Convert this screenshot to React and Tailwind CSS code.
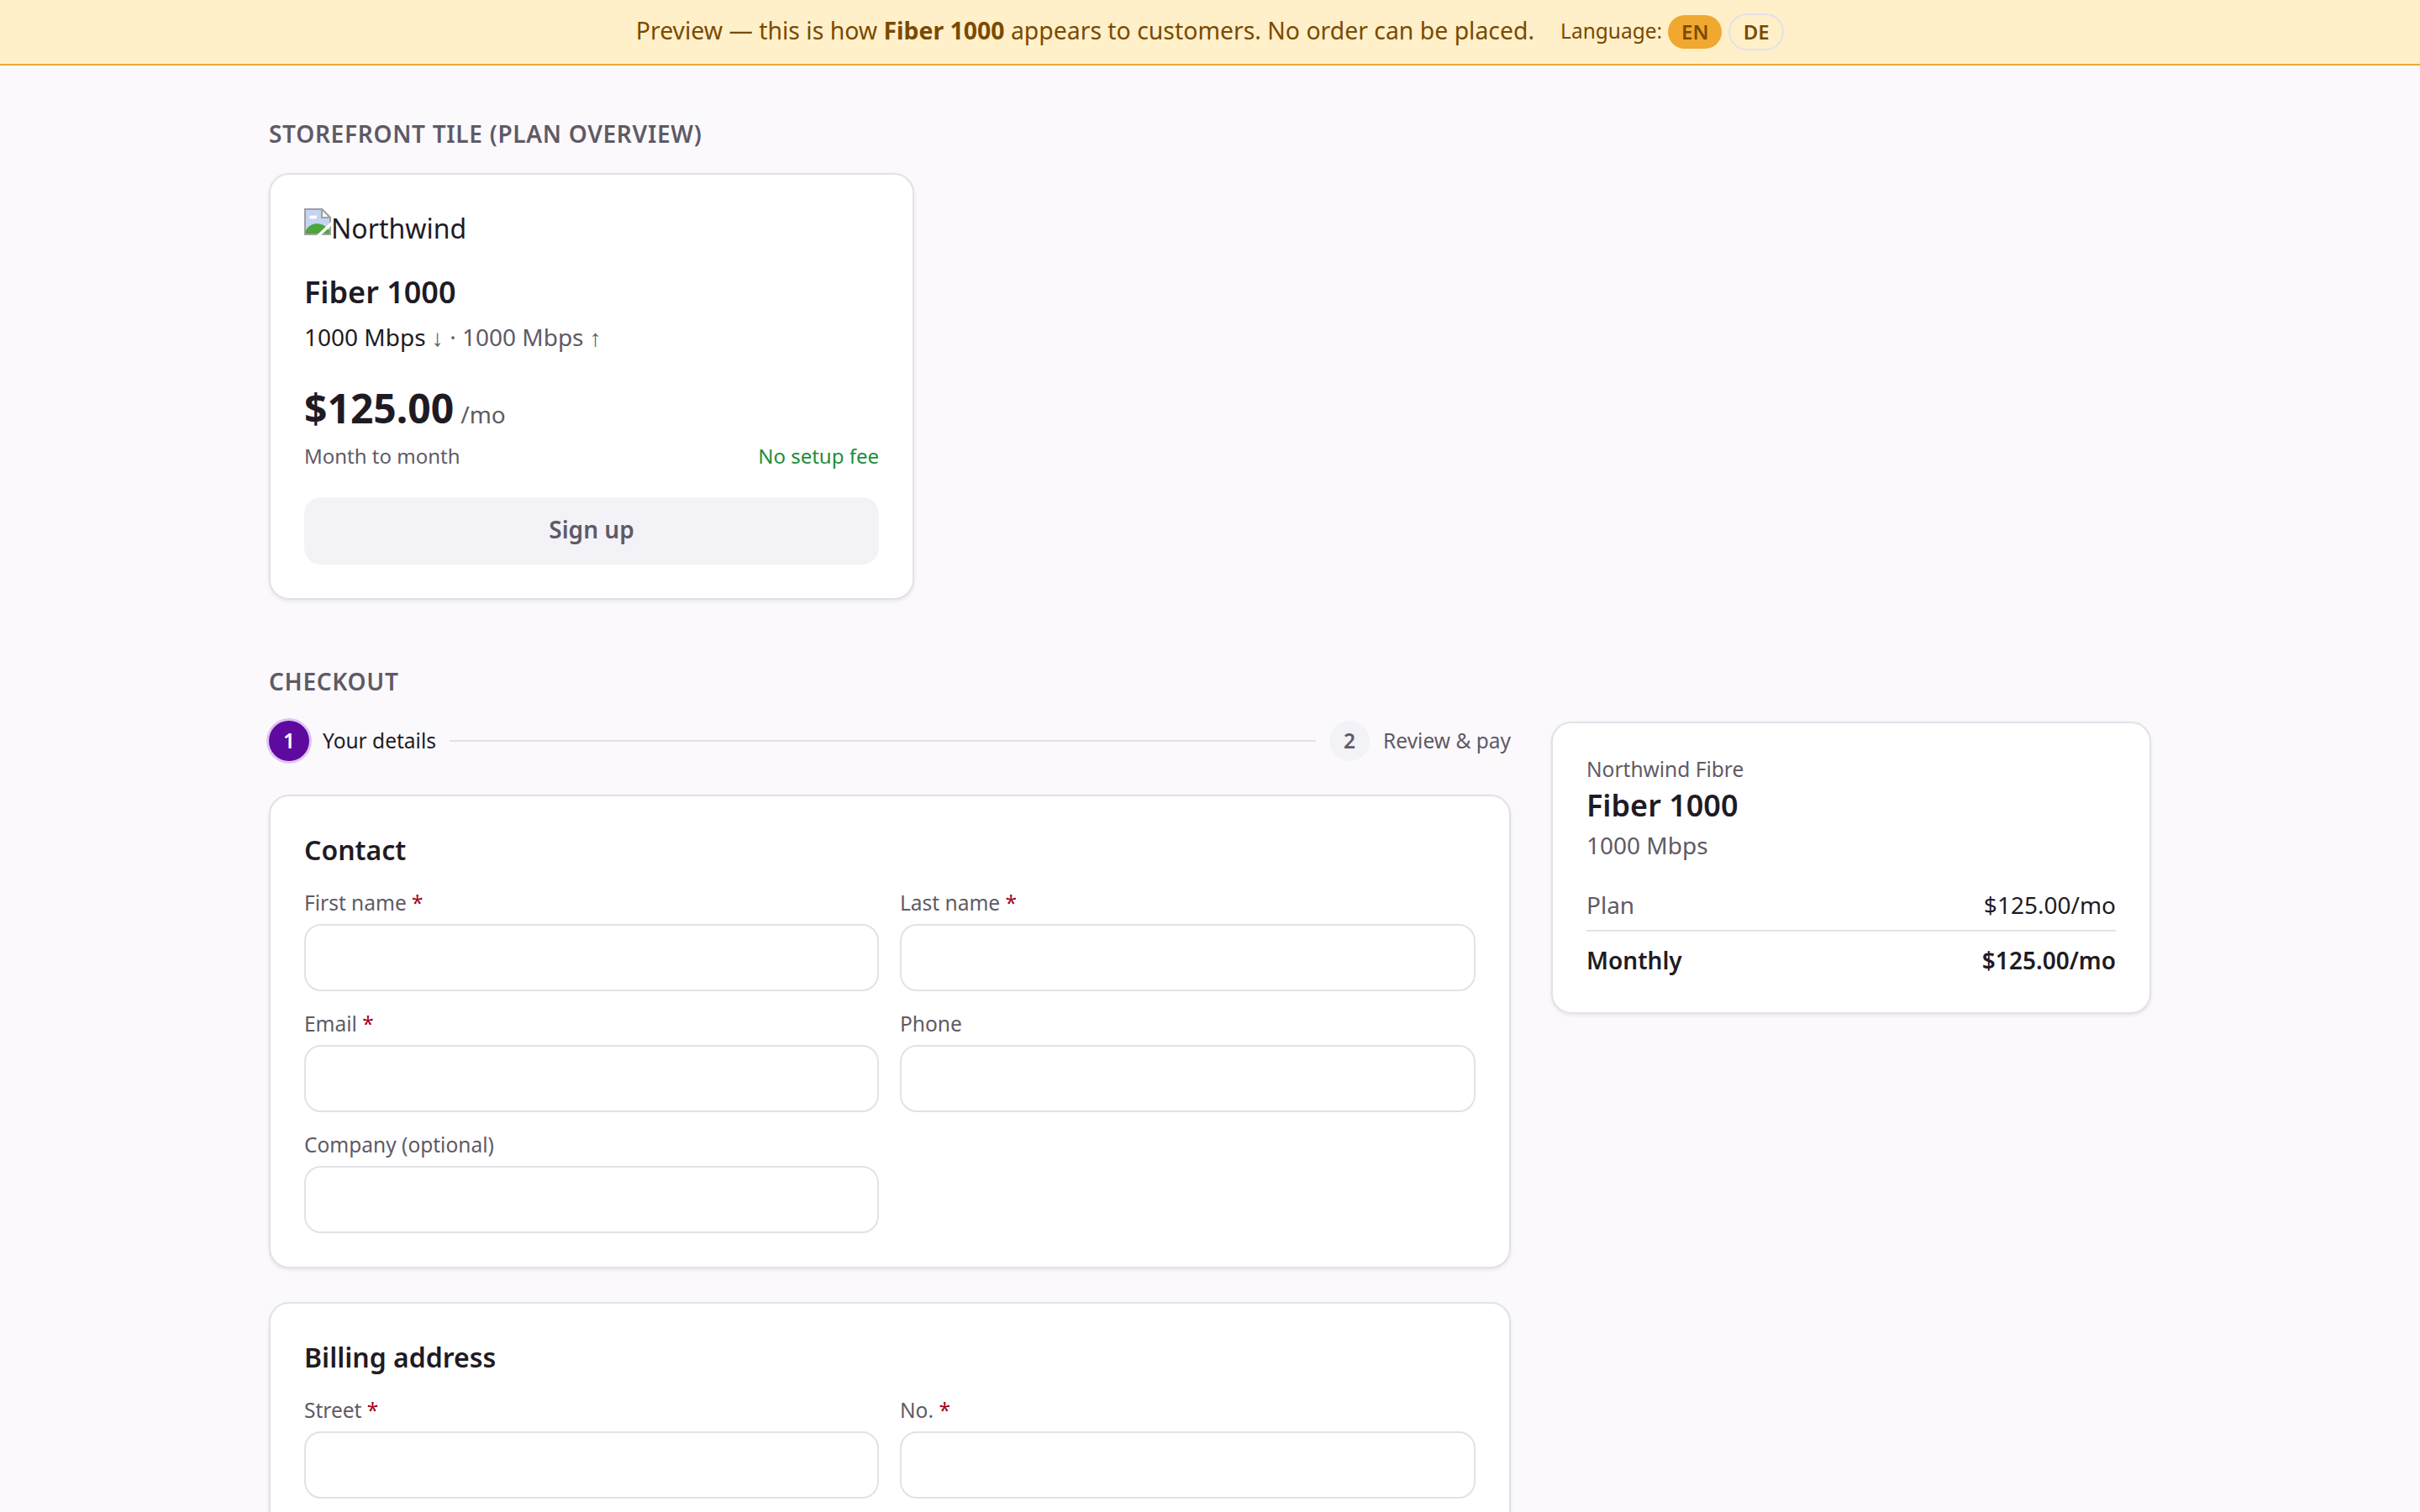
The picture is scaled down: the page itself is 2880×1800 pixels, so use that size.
import React from "react";

const BrokenImage = () => (
  <svg width="32" height="32" viewBox="0 0 16 16" className="shrink-0">
    <path d="M0.5 0.5H10.500L15.500 5.500V15.500H0.5Z" fill="#c3d5f2" stroke="#a0a0a0" />
    <path d="M10.500 0.5V5.500H15.500Z" fill="#fff" stroke="#a0a0a0" />
    <path d="M3 5.500C3 4 5 4 5.500 4.500C6.500 3.500 8 4.500 7.500 5.500C8 6.500 3.500 6.500 3 5.500Z" fill="#fff" />
    <path d="M1 15V13C3 9.500 7 8.500 10 9.500C12 10 13.500 11.500 15 13V15Z" fill="#4fa43a" />
    <path d="M7.500 16L16 8V10.500L10 16Z" fill="#fff" />
  </svg>
);

const Field = ({ label, required }) => (
  <div className="flex flex-col">
    <label className="pt-[1px] text-[24.5px] leading-[36px] text-[#5f5a66] mb-[7px]">
      {label}
      {required && <span className="text-[#a50021]"> *</span>}
    </label>
    <input className="h-[80px] w-full rounded-[20px] border-2 border-[#e3e1e8] bg-white" />
  </div>
);

const SectionTitle = ({ children }) => (
  <h2 className="text-[28px] leading-[40px] font-semibold tracking-[0.7px] text-[#5f5a66] uppercase">{children}</h2>
);

export default function App() {
  return (
    <div className="h-screen overflow-hidden bg-[#fbf9fc] text-[#1f1b24] font-['Noto_Sans',sans-serif]">
      <div className="h-[78px] flex items-center justify-center gap-[31px] bg-[#fff0c9] border-b-2 border-[#f0a830] text-[#7a4a00]">
        <span className="pb-[4px] text-[28.4px]">
          Preview — this is how <strong className="font-bold">Fiber 1000</strong> appears to customers. No order can be placed.
        </span>
        <div className="flex items-center gap-[7px] text-[24.5px]">
          <span className="pb-[1px]">Language:</span>
          <span className="h-[40px] w-[64px] justify-center rounded-full bg-[#f0a830] flex items-center text-[24px] font-semibold">EN</span>
          <span className="ml-[1px] h-[44px] w-[66px] justify-center rounded-full border-2 border-[#e3e1e8] flex items-center text-[24px] font-semibold">DE</span>
        </div>
      </div>

      <main className="w-[2240px] mx-auto pt-[61px]">
        <SectionTitle>Storefront tile (plan overview)</SectionTitle>
        <section className="mt-[27px] w-[768px] rounded-[24px] border-2 border-[#e3e1e8] bg-white shadow-[0_2px_4px_rgba(31,27,36,0.08)] p-[40px]">
          <div className="text-[32px] leading-[48px] flex items-start"><BrokenImage />Northwind</div>
          <h3 className="mt-[27px] text-[36px] leading-[50px] font-semibold">Fiber 1000</h3>
          <p className="mt-[8px] pb-[1px] text-[28px] leading-[40px] text-[#5f5a66]"><span className="text-[#1f1b24]">1000 Mbps</span> ↓ · 1000 Mbps ↑</p>
          <div className="mt-[29px] flex items-baseline gap-[8px]">
            <span className="text-[48px] leading-[70px] font-bold">$125.00</span>
            <span className="text-[28px] text-[#5f5a66]">/mo</span>
          </div>
          <div className="mt-[4px] flex justify-between text-[24px] leading-[36px]">
            <span className="text-[#5f5a66]">Month to month</span>
            <span className="text-[#1e8e3e]">No setup fee</span>
          </div>
          <button className="mt-[31px] w-full h-[80px] pb-[4px] rounded-[20px] bg-[#f3f2f7] text-[28px] font-semibold text-[#5f5a66]">Sign up</button>
        </section>

        <div className="mt-[77px]"><SectionTitle>Checkout</SectionTitle></div>
        <div className="mt-[27px] grid grid-cols-[1478px_1fr] gap-[48px] items-start">
          <div>
            <div className="flex items-center h-[48px] mb-[40px]">
              <span className="w-[48px] h-[48px] rounded-full bg-[#5f0a9e] text-white text-[24.5px] font-semibold flex items-center justify-center shadow-[0_0_0_3px_#dcc5f5]">1</span>
              <span className="ml-[16px] text-[24.5px]">Your details</span>
              <div className="flex-1 h-[2px] bg-[#e3e1e8] mx-[16px]"></div>
              <span className="w-[48px] h-[48px] rounded-full bg-[#f3f2f7] text-[#5f5a66] text-[24.5px] font-semibold flex items-center justify-center">2</span>
              <span className="ml-[16px] text-[24.5px] text-[#5f5a66]">Review &amp; pay</span>
            </div>
            <section className="rounded-[24px] border-2 border-[#e3e1e8] bg-white shadow-[0_2px_4px_rgba(31,27,36,0.08)] p-[40px]">
              <h3 className="mt-[2px] text-[32px] leading-[44px] font-semibold mb-[22px]">Contact</h3>
              <div className="grid grid-cols-[684px_1fr] gap-x-[25px] gap-y-[20px]">
                <Field label="First name" required />
                <Field label="Last name" required />
                <Field label="Email" required />
                <Field label="Phone" />
                <Field label="Company (optional)" />
              </div>
            </section>
            <section className="mt-[40px] rounded-[24px] border-2 border-[#e3e1e8] bg-white shadow-[0_2px_4px_rgba(31,27,36,0.08)] p-[40px]">
              <h3 className="mt-[2px] text-[32px] leading-[44px] font-semibold mb-[22px]">Billing address</h3>
              <div className="grid grid-cols-[684px_1fr] gap-x-[25px] gap-y-[20px]">
                <Field label="Street" required />
                <Field label="No." required />
              </div>
            </section>
          </div>
          <aside className="mt-[1px] rounded-[24px] border-2 border-[#e3e1e8] bg-white shadow-[0_2px_4px_rgba(31,27,36,0.08)] px-[40px] pt-[40px] pb-[42px]">
            <div className="text-[24.5px] leading-[30px] text-[#5f5a66]">Northwind Fibre</div>
            <div className="mt-[3px] text-[36px] leading-[50px] font-semibold">Fiber 1000</div>
            <div className="mt-[2px] text-[28px] leading-[40px] text-[#5f5a66]">1000 Mbps</div>
            <div className="mt-[31px] flex justify-between pb-[10px] border-b-2 border-[#e3e1e8] text-[28px] leading-[40px]">
              <span className="text-[#5f5a66]">Plan</span><span>$125.00/mo</span>
            </div>
            <div className="mt-[14px] flex justify-between text-[28px] leading-[40px] font-semibold">
              <span>Monthly</span><span>$125.00/mo</span>
            </div>
          </aside>
        </div>
      </main>
    </div>
  );
}
